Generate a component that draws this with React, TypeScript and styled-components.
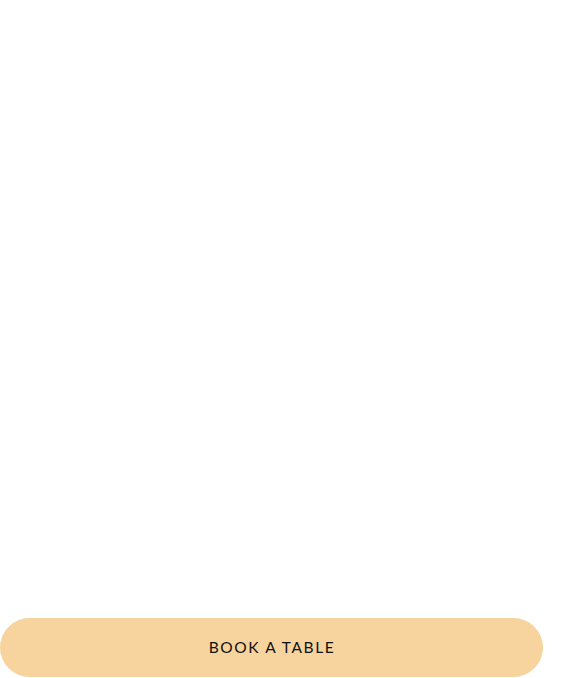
import styled, { createGlobalStyle } from 'styled-components';

const GlobalStyle = createGlobalStyle`
  html, body {
    margin: 0;
    padding: 0;
    background: #ffffff;
  }
  #root {
    height: 100vh;
  }
`;

const Page = styled.main`
  height: 100%;
  display: flex;
  flex-direction: column;
  justify-content: flex-end;
  padding-bottom: 1px;
  box-sizing: border-box;
`;

const BookButton = styled.button`
  width: 543px;
  height: 59px;
  border: 0;
  border-radius: 30px;
  background: #f7d49e;
  color: #111111;
  font-family: Lato, "Open Sans", sans-serif;
  font-size: 15.5px;
  font-weight: 400;
  letter-spacing: 1.6px;
  text-transform: uppercase;
  cursor: pointer;
  padding: 0 0 2px 1px;
`;

export default function App() {
  return (
    <>
      <GlobalStyle />
      <Page>
        <BookButton>Book a table</BookButton>
      </Page>
    </>
  );
}
